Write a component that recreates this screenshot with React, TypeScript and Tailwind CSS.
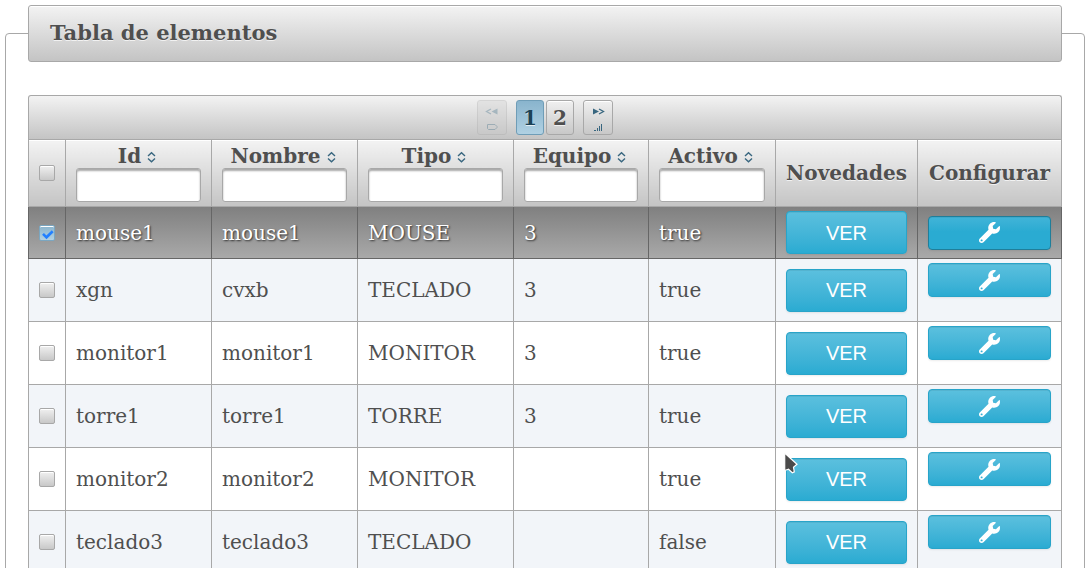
import { useState } from "react";
import type { ReactNode } from "react";
import { FaWrench } from "react-icons/fa";

type Item = { id: string; name: string; kind: string; team: string; active: boolean };

const items: Item[] = [
  { id: "mouse1", name: "mouse1", kind: "MOUSE", team: "3", active: true },
  { id: "xgn", name: "cvxb", kind: "TECLADO", team: "3", active: true },
  { id: "monitor1", name: "monitor1", kind: "MONITOR", team: "3", active: true },
  { id: "torre1", name: "torre1", kind: "TORRE", team: "3", active: true },
  { id: "monitor2", name: "monitor2", kind: "MONITOR", team: "", active: true },
  { id: "teclado3", name: "teclado3", kind: "TECLADO", team: "", active: false },
];

const filters = ["Id", "Nombre", "Tipo", "Equipo", "Activo"];

const th =
  "border border-[#a8a8a8] bg-linear-to-b from-[#f3f3f3] to-[#c4c4c4] px-[10px] py-1 font-bold text-shadow-[0_1px_0_rgb(255_255_255/0.7)] shadow-[inset_0_1px_0_white]";

function Tick({ label, checked, onChange }: { label: string; checked: boolean; onChange: () => void }) {
  return (
    <label className="grid size-4">
      <input
        type="checkbox"
        aria-label={label}
        checked={checked}
        onChange={onChange}
        className="col-start-1 row-start-1 size-4 appearance-none rounded-[2px] border border-[#a8a8a8] bg-linear-to-b from-[#f0f0f0] to-[#c8c8c8] shadow-[inset_0_1px_0_white] checked:border-[#7ba6c0] checked:from-[#8ab4cd] checked:to-[#b3d1e2]"
      />
      {checked && (
        <svg viewBox="0 0 16 16" className="pointer-events-none col-start-1 row-start-1 size-4" aria-hidden="true">
          <path d="M4 8.800 7.500 12.300 13.700 6.200" fill="none" stroke="#2380ff" strokeWidth="2.600" />
        </svg>
      )}
    </label>
  );
}

function SortIcon() {
  return (
    <svg viewBox="0 0 16 16" className="size-4" fill="none" stroke="#38667f" strokeWidth="1.4" aria-hidden="true">
      <path d="M5 8 8.500 4.800 12 8M5 10.500l3.500 3.200 3.500-3.200" />
    </svg>
  );
}

function PageButton({
  label,
  active = false,
  disabled = false,
  wide = false,
  onClick,
  children,
}: {
  label: string;
  active?: boolean;
  disabled?: boolean;
  wide?: boolean;
  onClick: () => void;
  children: ReactNode;
}) {
  return (
    <button
      type="button"
      aria-label={label}
      disabled={disabled}
      onClick={onClick}
      className={
        "flex h-[35px] flex-col items-center justify-center rounded-[3px] border bg-linear-to-b font-bold text-shadow-[0_1px_0_rgb(255_255_255/0.7)] disabled:opacity-35 " +
        (wide ? "w-[30px] " : "w-7 ") +
        (active
          ? "border-[#6f9db7] from-[#89b4cd] to-[#b0d1e3] text-[#1c4257]"
          : "border-[#a8a8a8] from-[#f0f0f0] to-[#c8c8c8] shadow-[inset_0_1px_0_white] disabled:from-[#d0d0d0] disabled:shadow-none")
      }
    >
      {children}
    </button>
  );
}

const blue =
  "flex w-full items-center justify-center rounded-[4px] border text-white shadow-[0_1px_2px_rgb(0_0_0/0.075),inset_0_1px_0_rgb(0_0_0/0.06)] ";

export default function App() {
  const [selected, setSelected] = useState<string[]>(["mouse1"]);
  const [page, setPage] = useState(1);
  const toggle = (id: string) =>
    setSelected((s) => (s.includes(id) ? s.filter((x) => x !== id) : [...s, id]));
  const all = selected.length === items.length;

  return (
    <main className="bg-white p-[5px] font-['DejaVu_Serif',serif] text-[20px] leading-6 text-[#4f4f4f]">
      <fieldset className="rounded-[4px] border border-[#a8a8a8] px-[22px] pt-[33px] pb-6">
        <legend className="w-full rounded-[3px] border border-[#a8a8a8] bg-linear-to-b from-[#f3f3f3] to-[#c4c4c4] px-[21px] pt-[15px] pb-4 text-[21px] leading-6 font-bold shadow-[inset_0_1px_0_white] text-shadow-[0_1px_0_rgb(255_255_255/0.7)]">
          Tabla de elementos
        </legend>
        <nav
          aria-label="Páginas"
          className="flex justify-center rounded-t-[3px] border border-b-0 border-[#a8a8a8] bg-linear-to-b from-[#f3f3f3] to-[#c4c4c4] py-1"
        >
          <PageButton label="Anterior" wide disabled={page === 1} onClick={() => setPage(1)}>
            <svg viewBox="0 0 16 29" className="h-[29px] w-4" fill="none" stroke="#38667f" aria-hidden="true">
              <path d="M7 6 2.500 8.500 7 11" strokeWidth="1.300" />
              <path d="M13.500 5.500v6L7.500 8.500Z" fill="#38667f" stroke="none" />
              <path d="M3.500 21.500h7.500l2 2v1l-2 2H4.500l-1-1v-4Z" />
            </svg>
          </PageButton>
          <div className="mx-[9px] flex gap-[2px]">
            <PageButton label="1" active={page === 1} onClick={() => setPage(1)}>
              1
            </PageButton>
            <PageButton label="2" active={page === 2} onClick={() => setPage(2)}>
              2
            </PageButton>
          </div>
          <PageButton label="Siguiente" wide disabled={page === 2} onClick={() => setPage(2)}>
            <svg viewBox="0 0 16 29" className="h-[29px] w-4" fill="none" stroke="#38667f" aria-hidden="true">
              <path d="M3 5.500v6l6-3Z" fill="#38667f" stroke="none" />
              <path d="M9 6l4.500 2.500L9 11" strokeWidth="1.300" />
              <path d="M5.500 28v-1M7.500 28v-3M9.500 28v-5M11.500 28v-7M4 27.500h1" />
            </svg>
          </PageButton>
        </nav>
        <table className="w-full table-fixed border-collapse">
          <colgroup>
            <col className="w-[37px]" />
            <col className="w-[146px]" />
            <col className="w-[146px]" />
            <col className="w-[156px]" />
            <col className="w-[135px]" />
            <col className="w-[127px]" />
            <col className="w-[142px]" />
            <col className="w-[144px]" />
          </colgroup>
          <thead>
            <tr>
              <th className={th}>
                <Tick
                  label="Seleccionar todo"
                  checked={all}
                  onChange={() => setSelected(all ? [] : items.map((i) => i.id))}
                />
              </th>
              {filters.map((f) => (
                <th key={f} className={th}>
                  <button type="button" className="flex h-6 w-full items-center justify-center gap-[2px] font-bold">
                    {f}
                    <SortIcon />
                  </button>
                  <input
                    type="text"
                    aria-label={f}
                    className="block h-[34px] w-full rounded-[3px] border border-[#a8a8a8] bg-white px-2 font-normal shadow-[inset_0_2px_2px_#a8a8a8]"
                  />
                </th>
              ))}
              <th className={th}>Novedades</th>
              <th className={th}>Configurar</th>
            </tr>
          </thead>
          <tbody>
            {items.map((item) => {
              const on = selected.includes(item.id);
              const td = "border px-[10px] py-1 " + (on ? "border-[#666666]" : "border-[#a8a8a8]");
              return (
                <tr
                  key={item.id}
                  className={
                    on
                      ? "bg-linear-to-b from-[#808080] to-[#aaaaaa] text-white text-shadow-[1px_1px_2px_rgb(0_0_0/0.7)]"
                      : "odd:bg-white even:bg-[#f2f5f9]"
                  }
                >
                  <td className={td}>
                    <Tick label={"Seleccionar " + item.id} checked={on} onChange={() => toggle(item.id)} />
                  </td>
                  <td className={td}>{item.id}</td>
                  <td className={td}>{item.name}</td>
                  <td className={td}>{item.kind}</td>
                  <td className={td}>{item.team}</td>
                  <td className={td}>{String(item.active)}</td>
                  <td className={td}>
                    <div className="relative">
                      <button
                        type="button"
                        className={
                          blue +
                          "h-[43px] border-[#28a4c9] bg-linear-to-b from-[#5bc0de] to-[#2aabd2] font-['Liberation_Sans',sans-serif] text-shadow-none"
                        }
                      >
                        VER
                      </button>
                      {item.id === "monitor2" && (
                        <svg
                          viewBox="0 0 14 22"
                          className="pointer-events-none absolute -top-[6px] -left-[2px] h-[22px] w-[14px]"
                          aria-hidden="true"
                        >
                          <path
                            d="M.7 1v17.500l3.800-1.200 3.800 3.400 2-.8-.8-4.600 3.500-3Z"
                            fill="#4a4a4a"
                            stroke="#fff"
                            strokeWidth="1.200"
                          />
                        </svg>
                      )}
                    </div>
                  </td>
                  <td className={td}>
                    <button
                      type="button"
                      aria-label={"Configurar " + item.id}
                      className={
                        blue +
                        (on
                          ? "h-[34px] border-[#1f7e9a] bg-linear-to-b from-[#41b4d8] to-[#2aabd2] to-45%"
                          : "mb-5 h-[34px] border-[#28a4c9] bg-linear-to-b from-[#5bc0de] to-[#2aabd2]")
                      }
                    >
                      <FaWrench className="size-[21px]" aria-hidden="true" />
                    </button>
                  </td>
                </tr>
              );
            })}
          </tbody>
        </table>
      </fieldset>
    </main>
  );
}
